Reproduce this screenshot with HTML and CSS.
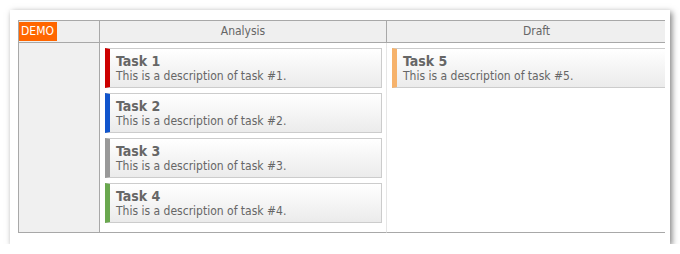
FILE: index.html
```html
<!DOCTYPE html>
<html>
  <head>
    <link rel="stylesheet" href="styles.css">
  </head>
  <body>
    <div class="frame">
      <div class="viewport">
        <div class="kanban">
          <div class="corner"><span class="demo">DEMO</span></div>
          <div class="col-header">Analysis</div>
          <div class="col-header last">Draft</div>

          <div class="row-header"></div>
          <div class="cell">
            <div class="card red">
              <div class="card-title">Task 1</div>
              <div class="card-text">This is a description of task #1.</div>
            </div>
            <div class="card blue">
              <div class="card-title">Task 2</div>
              <div class="card-text">This is a description of task #2.</div>
            </div>
            <div class="card gray">
              <div class="card-title">Task 3</div>
              <div class="card-text">This is a description of task #3.</div>
            </div>
            <div class="card green">
              <div class="card-title">Task 4</div>
              <div class="card-text">This is a description of task #4.</div>
            </div>
          </div>
          <div class="cell last">
            <div class="card orange">
              <div class="card-title">Task 5</div>
              <div class="card-text">This is a description of task #5.</div>
            </div>
          </div>
        </div>
      </div>
    </div>
  </body>
</html>
```

FILE: styles.css
```css
:root {
  --grid-border: #a8a8a8;
  --header-bg: #efefef;
  --text-color: #666666;
  --font-family: 'DejaVu Sans Condensed', 'DejaVu Sans', Verdana, sans-serif;
}

body {
  margin: 0;
  background: #ffffff;
  font-family: var(--font-family);
  color: var(--text-color);
}

.frame {
  margin: 10px 0 0 10px;
  width: 660px;
  height: 234px;
  box-sizing: border-box;
  padding: 10px 5px 0 8px;
  background: #ffffff;
  box-shadow: 2px 2px 6px rgba(0, 0, 0, 0.5);
}

.viewport {
  overflow: hidden;
  height: 213px;
}

.kanban {
  display: grid;
  grid-template-columns: 81px 287px 300px;
  grid-template-rows: 22px 190px;
  width: 700px;
  border-top: 1px solid var(--grid-border);
  border-left: 1px solid var(--grid-border);
  box-sizing: border-box;
}

.corner,
.col-header {
  background: var(--header-bg);
  border-right: 1px solid var(--grid-border);
  border-bottom: 1px solid var(--grid-border);
  font-size: 12px;
  line-height: 21px;
}

.col-header {
  text-align: center;
}

.corner {
  padding-top: 1px;
}

.demo {
  display: inline-block;
  background: #ff6600;
  color: #ffffff;
  height: 19px;
  line-height: 19px;
  padding: 0 3px 0 2px;
  vertical-align: top;
}

.row-header {
  background: #f0f0f0;
  border-right: 1px solid var(--grid-border);
  border-bottom: 1px solid var(--grid-border);
}

.cell {
  display: flex;
  flex-direction: column;
  gap: 5px;
  padding: 5px 4px 0 5px;
  border-right: 1px solid #e6e6e6;
  border-bottom: 1px solid var(--grid-border);
}

.card {
  height: 40px;
  box-sizing: border-box;
  border: 1px solid #cccccc;
  border-left: 5px solid #999999;
  background: linear-gradient(to bottom, #ffffff, #ebebeb);
  padding: 4px 0 0 6px;
}

.card.red { border-left-color: #cc0000; }
.card.blue { border-left-color: #1155cc; }
.card.gray { border-left-color: #999999; }
.card.green { border-left-color: #6aa84f; }
.card.orange { border-left-color: #f6b26b; }

.card-title {
  font-size: 14px;
  font-weight: bold;
  line-height: 17px;
}

.card-text {
  font-size: 12px;
  line-height: 13px;
}
```
